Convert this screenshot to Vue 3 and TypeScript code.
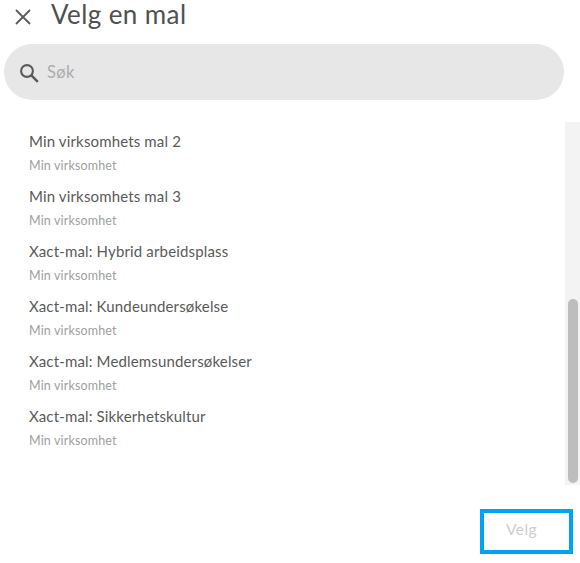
<script setup lang="ts">
const items: string[] = [
  'Min virksomhets mal 2',
  'Min virksomhets mal 3',
  'Xact-mal: Hybrid arbeidsplass',
  'Xact-mal: Kundeundersøkelse',
  'Xact-mal: Medlemsundersøkelser',
  'Xact-mal: Sikkerhetskultur',
]
</script>

<template>
  <div class="dialog">
    <header class="head">
      <svg class="close" viewBox="0 0 16 16" width="16" height="16" aria-hidden="true">
        <path d="M1 1 15 15M15 1 1 15" stroke="#5a5a5a" stroke-width="1.8" fill="none" />
      </svg>
      <h1 class="title">Velg en mal</h1>
    </header>
    <div class="search">
      <svg class="glass" viewBox="0 0 20 20" width="20" height="20" aria-hidden="true">
        <circle cx="8" cy="8" r="5.9" stroke="#5a5a5a" stroke-width="2.1" fill="none" />
        <path d="M12.4 12.4 18.8 18.8" stroke="#5a5a5a" stroke-width="2.5" fill="none" />
      </svg>
      <span class="placeholder">Søk</span>
    </div>
    <div class="body">
      <ul class="list">
        <li v-for="item in items" :key="item" class="item">
          <span class="name">{{ item }}</span>
          <span class="org">Min virksomhet</span>
        </li>
      </ul>
      <div class="track"><div class="thumb"></div></div>
    </div>
    <footer class="foot">
      <button class="pick" type="button">Velg</button>
    </footer>
  </div>
</template>

<style>
html, body { background: #fff; }
</style>

<style scoped>
.dialog {
  width: 580px;
  height: 563px;
  overflow: hidden;
  font-family: Lato, "Noto Sans", sans-serif;
  color: #444;
  display: flex;
  flex-direction: column;
}
.head {
  height: 28px;
  display: flex;
  align-items: center;
  padding-left: 15px;
}
.close { margin-top: 5px; }
.title {
  margin: 0 0 0 20px;
  font-size: 26px;
  font-weight: 400;
  line-height: 28px;
  color: #505050;
  letter-spacing: 0.4px;
}
.search {
  margin: 16px 0 0 4px;
  width: 560px;
  height: 56px;
  box-sizing: border-box;
  border-radius: 28px;
  background: #e7e7e7;
  display: flex;
  align-items: center;
  padding-left: 15px;
}
.glass { margin-top: 1px; }
.placeholder {
  margin: 0 0 0 8px;
  font-size: 16.5px;
  color: #acacac;
  letter-spacing: 0.4px;
}
.body {
  margin-top: 22px;
  height: 363px;
  display: flex;
}
.list {
  flex: 1;
  list-style: none;
  margin: 0;
  padding: 0 0 0 29px;
}
.item {
  height: 55px;
  display: flex;
  flex-direction: column;
}
.name {
  font-size: 15px;
  line-height: 20px;
  margin-top: 9px;
  color: #5a5a5a;
  letter-spacing: 0.15px;
}
.org {
  font-size: 12.5px;
  line-height: 16px;
  margin-top: 7px;
  color: #a0a0a0;
  letter-spacing: 0.15px;
}
.track {
  width: 15px;
  background: #f3f3f3;
  display: flex;
  flex-direction: column;
  justify-content: flex-end;
  padding: 0 2px 2px 3px;
  box-sizing: border-box;
}
.thumb {
  height: 184px;
  border-radius: 5px;
  background: #bdbdbd;
}
.foot {
  display: flex;
  justify-content: flex-end;
  padding: 24px 7px 0 0;
}
.pick {
  width: 93px;
  height: 45px;
  box-sizing: border-box;
  border: 4px solid #00a2f2;
  background: #fff;
  color: #cdcdcd;
  font-family: inherit;
  font-size: 15.5px;
  letter-spacing: 0.4px;
  padding: 0 10px 5px 0;
}
</style>
